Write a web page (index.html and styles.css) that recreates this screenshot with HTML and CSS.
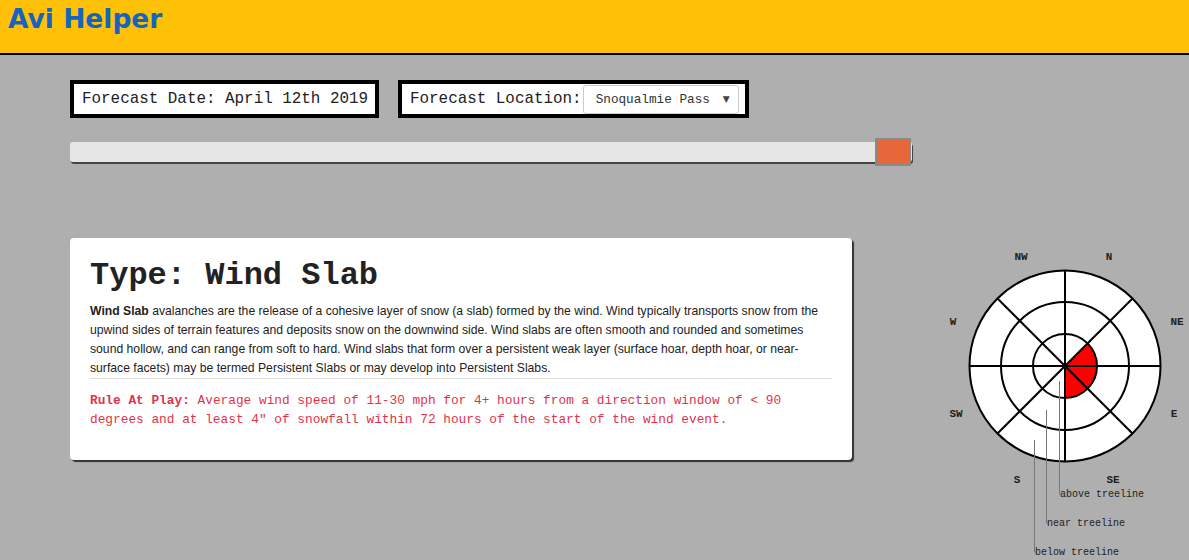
FILE: index.html
```html
<!DOCTYPE html>
<html>
<head>
<meta charset="utf-8">
<title>Avi Helper</title>
<link rel="stylesheet" href="styles.css">
</head>
<body>
<header class="topbar">
  <h1 class="brand">Avi Helper</h1>
</header>
<main class="main">
  <section class="left">
    <div class="controls">
      <div class="box">Forecast Date: April 12th 2019</div>
      <div class="box box-loc">
        <span>Forecast Location:</span>
        <div class="select"><span class="select-text">Snoqualmie Pass</span><span class="caret">&#9660;</span></div>
      </div>
    </div>
    <div class="slider">
      <div class="track"></div>
      <div class="thumb"></div>
    </div>
    <article class="card">
      <h2 class="card-title">Type: Wind Slab</h2>
      <p class="desc"><b>Wind Slab</b> avalanches are the release of a cohesive layer of snow (a slab) formed by the wind. Wind typically transports snow from the<br>upwind sides of terrain features and deposits snow on the downwind side. Wind slabs are often smooth and rounded and sometimes<br>sound hollow, and can range from soft to hard. Wind slabs that form over a persistent weak layer (surface hoar, depth hoar, or near-<br>surface facets) may be termed Persistent Slabs or may develop into Persistent Slabs.</p>
      <p class="rule"><b>Rule At Play:</b> Average wind speed of 11-30 mph for 4+ hours from a direction window of &lt; 90 degrees and at least 4" of snowfall within 72 hours of the start of the wind event.</p>
    </article>
  </section>
  <svg class="rose" width="259" height="330" viewBox="930 230 259 330" xmlns="http://www.w3.org/2000/svg">
    <circle cx="1065" cy="366" r="95.5" fill="#fff" stroke="#000" stroke-width="2"/>
    <circle cx="1065" cy="366" r="64" fill="none" stroke="#000" stroke-width="2"/>
    <path d="M1065 366 L1087.6 343.4 A32 32 0 0 1 1065 398 Z" fill="#f00"/>
    <circle cx="1065" cy="366" r="32" fill="none" stroke="#000" stroke-width="2"/>
    <g stroke="#000" stroke-width="2">
      <line x1="1065" y1="270.5" x2="1065" y2="461.5"/>
      <line x1="969.5" y1="366" x2="1160.5" y2="366"/>
      <line x1="997.5" y1="298.5" x2="1132.5" y2="433.5"/>
      <line x1="1132.5" y1="298.5" x2="997.5" y2="433.5"/>
    </g>
    <g stroke="#777" stroke-width="1" fill="none">
      <polyline points="1059.5,381 1059.5,494 1062,494"/>
      <polyline points="1046.5,410 1046.5,523 1049,523"/>
      <polyline points="1034.5,440 1034.5,552 1037,552"/>
    </g>
    <g class="dir">
      <text x="1021" y="260">NW</text>
      <text x="1109" y="260">N</text>
      <text x="1177" y="325">NE</text>
      <text x="953" y="325">W</text>
      <text x="956" y="417">SW</text>
      <text x="1174" y="417">E</text>
      <text x="1017" y="483">S</text>
      <text x="1113" y="483">SE</text>
    </g>
    <g class="legend">
      <text x="1060" y="497">above treeline</text>
      <text x="1047" y="526">near treeline</text>
      <text x="1035" y="555">below treeline</text>
    </g>
  </svg>
</main>
</body>
</html>
```
FILE: styles.css
```css
html, body {
  margin: 0;
  padding: 0;
}
body {
  background: #afafaf;
  font-family: "Liberation Sans", Arial, sans-serif;
  width: 1189px;
  height: 560px;
  overflow: hidden;
}
.topbar {
  background: #ffc107;
  height: 53px;
  border-bottom: 2px solid #000;
  box-sizing: content-box;
}
.brand {
  margin: 0;
  padding: 0 0 0 8px;
  font-family: "DejaVu Sans", Verdana, sans-serif;
  font-weight: 700;
  font-size: 26.5px;
  line-height: 38px;
  color: #1565c0;
}
.main {
  display: flex;
  align-items: flex-start;
  padding: 25px 0 0 70px;
}
.left {
  width: 842px;
  flex: none;
}
.controls {
  display: flex;
  gap: 19px;
}
.box {
  border: 4px solid #000;
  background: #fff;
  height: 30px;
  box-sizing: content-box;
  display: flex;
  align-items: center;
  padding: 0 7px 0 8px;
  font-family: "Liberation Mono", "Courier New", monospace;
  font-size: 15.9px;
  color: #222;
  width: 286px;
  white-space: nowrap;
}
.box-loc {
  width: auto;
  padding: 0 6px 0 8px;
  gap: 1px;
}
.select {
  width: 156px;
  height: 29px;
  box-sizing: border-box;
  border: 1px solid #ccc;
  border-radius: 3px;
  display: flex;
  align-items: center;
  justify-content: space-between;
  padding: 0 8px 0 12px;
  font-size: 12.7px;
  color: #333;
}
.caret {
  font-size: 9px;
  color: #444;
  font-family: "DejaVu Sans", sans-serif;
}
.slider {
  margin-top: 20px;
  height: 28px;
  display: flex;
  align-items: center;
  position: relative;
}
.track {
  width: 842px;
  height: 20px;
  background: #e6e6e6;
  border-radius: 3px;
  box-shadow: 1px 2px 0 #444;
}
.thumb {
  position: absolute;
  left: 805px;
  top: 0;
  width: 32px;
  height: 24px;
  background: #e8673a;
  border: 2px solid #8a8a8a;
}
.card {
  margin-top: 72px;
  width: 782px;
  height: 222px;
  box-sizing: border-box;
  background: #fff;
  border-radius: 4px;
  box-shadow: 2px 2px 1px #333;
  padding: 20px 20px 0 20px;
}
.card-title {
  margin: 0;
  font-family: "Liberation Mono", "Courier New", monospace;
  font-weight: 700;
  font-size: 32px;
  line-height: 36px;
  color: #222;
}
.desc {
  margin: 8px 0 0 0;
  font-size: 12.2px;
  line-height: 19px;
  color: #222;
  white-space: nowrap;
  padding-bottom: 0;
  border-bottom: 1px solid #ddd;
}
.rule {
  margin: 12px 0 0 0;
  font-family: "Liberation Mono", "Courier New", monospace;
  font-size: 12.8px;
  line-height: 19px;
  color: #e0334a;
}
.rose {
  flex: none;
  margin: 150px 0 0 18px;
}
.dir text {
  font-family: "Liberation Mono", "Courier New", monospace;
  font-weight: 700;
  font-size: 11px;
  fill: #222;
  text-anchor: middle;
}
.legend text {
  font-family: "Liberation Mono", "Courier New", monospace;
  font-size: 10px;
  fill: #222;
}
```
